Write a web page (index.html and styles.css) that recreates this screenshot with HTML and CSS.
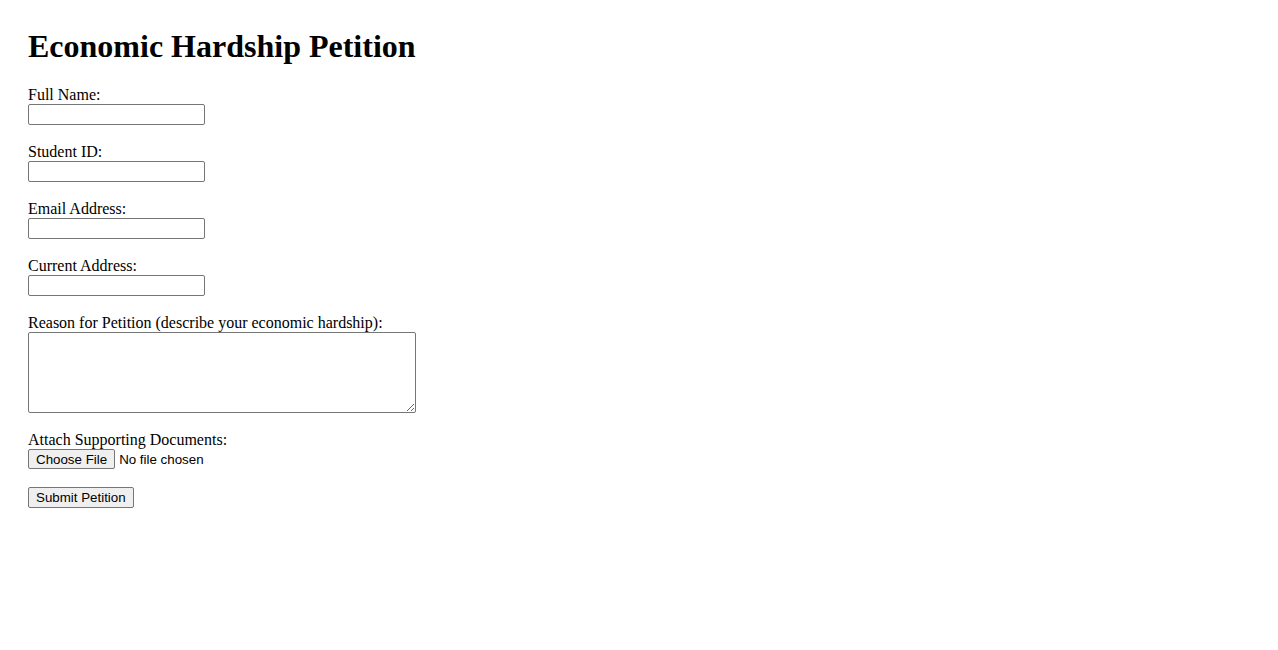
FILE: index.html
```html
<!DOCTYPE html>
<html>
<head>
    <title>Economic Hardship Petition</title>
    <link rel="stylesheet" href="styles.css">
</head>
<body>
    <div id="page">
        <h1>Economic Hardship Petition</h1>
        <form>
            <div class="field">
                <label for="name">Full Name:</label>
                <input type="text" id="name" name="name">
            </div>
            <div class="field">
                <label for="sid">Student ID:</label>
                <input type="text" id="sid" name="sid">
            </div>
            <div class="field">
                <label for="email">Email Address:</label>
                <input type="email" id="email" name="email">
            </div>
            <div class="field">
                <label for="address">Current Address:</label>
                <input type="text" id="address" name="address">
            </div>
            <div class="field">
                <label for="reason">Reason for Petition (describe your economic hardship):</label>
                <textarea id="reason" name="reason"></textarea>
            </div>
            <div class="field">
                <label for="docs">Attach Supporting Documents:</label>
                <input type="file" id="docs" name="docs">
            </div>
            <button type="submit">Submit Petition</button>
        </form>
    </div>
</body>
</html>
```

FILE: styles.css
```css
html, body {
    margin: 0;
    padding: 0;
}

body {
    font-family: 'Liberation Serif', 'Times New Roman', serif;
    font-size: 16px;
    color: #000;
    background: #fff;
}

#page {
    padding: 28px;
}

h1 {
    margin: 0 0 0.67em 0;
    font-size: 2em;
    font-weight: bold;
}

.field {
    margin-bottom: 18px;
}

label {
    display: block;
}

input[type="text"],
input[type="email"] {
    display: block;
    width: 177px;
    height: 21px;
    box-sizing: border-box;
    border: 1px solid #767676;
    border-radius: 2px;
    padding: 1px 2px;
    margin: 0;
    font-family: 'Liberation Sans', Arial, sans-serif;
    font-size: 13.33px;
}

textarea {
    display: block;
    width: 388px;
    height: 81px;
    box-sizing: border-box;
    border: 1px solid #767676;
    border-radius: 2px;
    padding: 2px;
    margin: 0;
    font-family: 'Liberation Mono', monospace;
    font-size: 13.33px;
}

input[type="file"] {
    display: block;
    margin: 0;
    font-family: 'Liberation Sans', Arial, sans-serif;
    font-size: 13.33px;
}

input[type="file"]::file-selector-button,
button {
    font-family: 'Liberation Sans', Arial, sans-serif;
    font-size: 13.33px;
    color: #000;
    background: #efefef;
    border: 1px solid #767676;
    border-radius: 2px;
    padding: 1px 7px;
    height: 21px;
    box-sizing: border-box;
}

input[type="file"]::file-selector-button {
    height: 20px;
    margin-right: 4px;
}

button {
    display: block;
    margin: 0;
}
```
